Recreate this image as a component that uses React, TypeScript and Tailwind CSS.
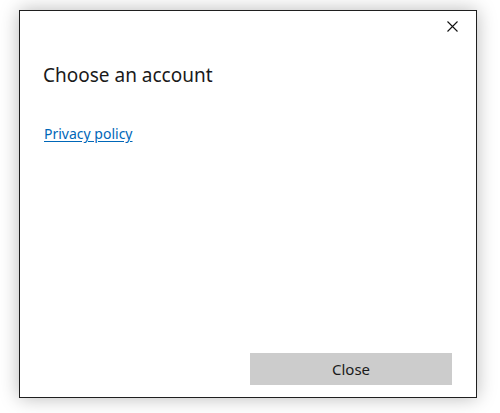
export default function App() {
  return (
    <div className="min-h-[413px] w-[500px] bg-white pl-[19px] pt-[10px] font-['Noto_Sans',sans-serif]">
      <div className="relative flex h-[388px] w-[458px] flex-col border border-[#1f1f1f] bg-white shadow-[0_0_18px_rgba(0,0,0,0.28)]">
        <button className="absolute right-[18px] top-[10px] flex h-[11px] w-[11px] items-center justify-center text-[#111]">
          <svg width="11" height="11" viewBox="0 0 11 11" fill="none">
            <path d="M0.5 0.5L10.5 10.5M10.5 0.5L0.5 10.5" stroke="currentColor" strokeWidth="1.1" />
          </svg>
        </button>
        <h1 className="ml-[23px] mt-[50px] text-[19px] leading-[28px] text-[#1a1a1a]">
          Choose an account
        </h1>
        <a href="#" className="ml-[24px] mt-[35px] w-fit text-[14px] leading-[20px] text-[#0067b8] underline underline-offset-2">
          Privacy policy
        </a>
        <div className="mt-auto mb-[12px] mr-[24px] flex justify-end">
          <button className="h-[32px] w-[202px] bg-[#cccccc] text-[15px] text-[#1a1a1a]">
            Close
          </button>
        </div>
      </div>
    </div>
  );
}
